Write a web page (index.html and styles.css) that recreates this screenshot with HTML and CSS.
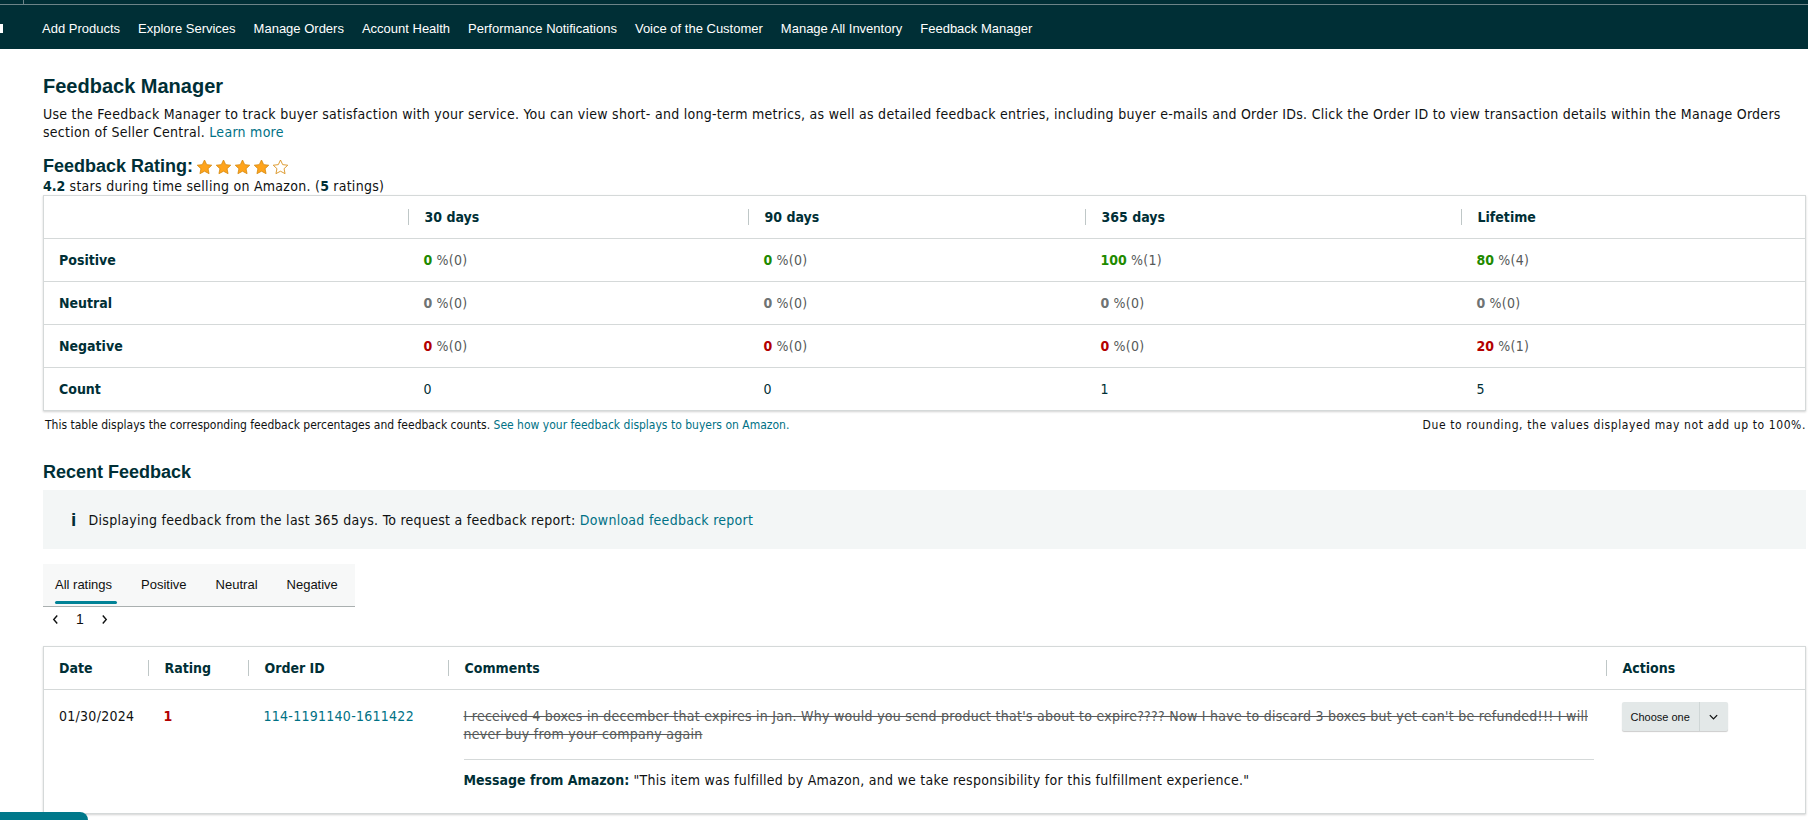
FILE: index.html
```html
<!DOCTYPE html>
<html lang="en">
<head>
    <meta charset="UTF-8">
    <meta name="viewport" content="width=device-width, initial-scale=1.0">
    <title>Feedback Manager</title>
    <link rel="stylesheet" href="styles.css">
</head>
<body>

    <div class="topbar">
        <div class="topbar-strip"><span class="strip-tick"></span></div>
        <nav class="nav">
            <span class="nav-icon"></span>
            <a href="#">Add Products</a>
            <a href="#">Explore Services</a>
            <a href="#">Manage Orders</a>
            <a href="#">Account Health</a>
            <a href="#">Performance Notifications</a>
            <a href="#">Voice of the Customer</a>
            <a href="#">Manage All Inventory</a>
            <a href="#">Feedback Manager</a>
        </nav>
    </div>

    <div class="page">
        <h1>Feedback Manager</h1>
        <p class="intro">Use the Feedback Manager to track buyer satisfaction with your service. You can view short- and long-term metrics, as well as detailed feedback entries, including buyer e-mails and Order IDs. Click the Order ID to view transaction details within the Manage Orders section of Seller Central. <a href="#">Learn more</a></p>

        <h2 class="rating-title">Feedback Rating:
            <span class="stars">
                <svg viewBox="0 0 20 19"><path class="star-full" d="M10 1.2l2.6 5.5 6 .7-4.4 4.1 1.2 5.9L10 14.5l-5.4 2.9 1.2-5.9L1.4 7.4l6-.7z"/></svg>
                <svg viewBox="0 0 20 19"><path class="star-full" d="M10 1.2l2.6 5.5 6 .7-4.4 4.1 1.2 5.9L10 14.5l-5.4 2.9 1.2-5.9L1.4 7.4l6-.7z"/></svg>
                <svg viewBox="0 0 20 19"><path class="star-full" d="M10 1.2l2.6 5.5 6 .7-4.4 4.1 1.2 5.9L10 14.5l-5.4 2.9 1.2-5.9L1.4 7.4l6-.7z"/></svg>
                <svg viewBox="0 0 20 19"><path class="star-full" d="M10 1.2l2.6 5.5 6 .7-4.4 4.1 1.2 5.9L10 14.5l-5.4 2.9 1.2-5.9L1.4 7.4l6-.7z"/></svg>
                <svg viewBox="0 0 20 19"><path class="star-empty" d="M10 1.2l2.6 5.5 6 .7-4.4 4.1 1.2 5.9L10 14.5l-5.4 2.9 1.2-5.9L1.4 7.4l6-.7z"/></svg>
            </span>
        </h2>
        <div class="rating-sub"><b>4.2</b> stars during time selling on Amazon. (<b>5</b> ratings)</div>

        <table class="box-table summary">
            <colgroup>
                <col style="width:364px">
                <col style="width:340px">
                <col style="width:337px">
                <col style="width:376px">
                <col>
            </colgroup>
            <thead>
                <tr>
                    <th></th>
                    <th><span class="col-label">30 days</span></th>
                    <th><span class="col-label">90 days</span></th>
                    <th><span class="col-label">365 days</span></th>
                    <th><span class="col-label">Lifetime</span></th>
                </tr>
            </thead>
            <tbody>
                <tr>
                    <th>Positive</th>
                    <td><b class="pos">0</b> %(0)</td>
                    <td><b class="pos">0</b> %(0)</td>
                    <td><b class="pos">100</b> %(1)</td>
                    <td><b class="pos">80</b> %(4)</td>
                </tr>
                <tr>
                    <th>Neutral</th>
                    <td><b class="neu">0</b> %(0)</td>
                    <td><b class="neu">0</b> %(0)</td>
                    <td><b class="neu">0</b> %(0)</td>
                    <td><b class="neu">0</b> %(0)</td>
                </tr>
                <tr>
                    <th>Negative</th>
                    <td><b class="neg">0</b> %(0)</td>
                    <td><b class="neg">0</b> %(0)</td>
                    <td><b class="neg">0</b> %(0)</td>
                    <td><b class="neg">20</b> %(1)</td>
                </tr>
                <tr>
                    <th>Count</th>
                    <td class="count">0</td>
                    <td class="count">0</td>
                    <td class="count">1</td>
                    <td class="count">5</td>
                </tr>
            </tbody>
        </table>

        <div class="table-note">
            <span>This table displays the corresponding feedback percentages and feedback counts. <a href="#">See how your feedback displays to buyers on Amazon.</a></span>
            <span class="note-right">Due to rounding, the values displayed may not add up to 100%.</span>
        </div>

        <h2 class="section-title">Recent Feedback</h2>

        <div class="info-box">
            <span class="info-icon">i</span>
            <span>Displaying feedback from the last 365 days. To request a feedback report: <a href="#">Download feedback report</a></span>
        </div>

        <div class="tabs">
            <a href="#" class="tab active">All ratings</a>
            <a href="#" class="tab">Positive</a>
            <a href="#" class="tab">Neutral</a>
            <a href="#" class="tab">Negative</a>
        </div>

        <div class="pager">
            <svg viewBox="0 0 8 12"><path d="M6 1.5L2 6l4 4.5"/></svg>
            <span>1</span>
            <svg viewBox="0 0 8 12"><path d="M2 1.5L6 6l-4 4.5"/></svg>
        </div>

        <table class="box-table feedback">
            <colgroup>
                <col style="width:104px">
                <col style="width:100px">
                <col style="width:200px">
                <col style="width:1158px">
                <col>
            </colgroup>
            <thead>
                <tr>
                    <th>Date</th>
                    <th><span class="col-label">Rating</span></th>
                    <th><span class="col-label">Order ID</span></th>
                    <th><span class="col-label">Comments</span></th>
                    <th><span class="col-label">Actions</span></th>
                </tr>
            </thead>
            <tbody>
                <tr>
                    <td>01/30/2024</td>
                    <td><b class="neg">1</b></td>
                    <td><a href="#">114-1191140-1611422</a></td>
                    <td class="comment-cell">
                        <div class="comment">I received 4 boxes in december that expires in Jan. Why would you send product that's about to expire???? Now I have to discard 3 boxes but yet can't be refunded!!! I will never buy from your company again</div>
                        <div class="amazon-msg"><b>Message from Amazon:</b> "This item was fulfilled by Amazon, and we take responsibility for this fulfillment experience."</div>
                    </td>
                    <td class="actions-cell">
                        <div class="split-btn">
                            <span class="split-main">Choose one</span>
                            <span class="split-arrow">
                                <svg viewBox="0 0 12 8"><path d="M2 2l4 4 4-4"/></svg>
                            </span>
                        </div>
                    </td>
                </tr>
            </tbody>
        </table>
    </div>

    <div class="help-tab"></div>

</body>
</html>
```

FILE: styles.css
```css
body {
    margin: 0;
    font-family: "DejaVu Sans Condensed", "DejaVu Sans", sans-serif;
    font-size: 14px;
    line-height: 18px;
    letter-spacing: 0.27px;
    color: #0f1111;
    background: #fff;
}

a {
    color: #007185;
    text-decoration: none;
}

b, th {
    letter-spacing: 0;
}

/* top navigation */
.topbar {
    background: #002f36;
    height: 49px;
}

.topbar-strip {
    height: 4px;
    border-bottom: 1px solid #6d8488;
}

.strip-tick {
    display: block;
    margin-left: 23px;
    width: 1px;
    height: 4px;
    background: #6d8488;
}

.nav {
    display: flex;
    align-items: center;
    gap: 18px;
    height: 44px;
    padding-top: 3px;
    box-sizing: border-box;
    font-family: "Liberation Sans", Arial, sans-serif;
    font-size: 13px;
    letter-spacing: 0;
}

.nav a {
    color: #fff;
}

.nav-icon {
    width: 3px;
    height: 9px;
    background: #fff;
    margin-right: 21px;
}

/* page */
.page {
    padding: 0 2px 30px 43px;
}

h1 {
    font-family: "Liberation Sans", Arial, sans-serif;
    font-size: 20px;
    line-height: 23px;
    letter-spacing: 0;
    color: #002f36;
    margin: 26px 0 0;
}

.intro {
    margin: 7px 0 0;
    padding-right: 20px;
}

.rating-title {
    display: flex;
    align-items: center;
    font-family: "Liberation Sans", Arial, sans-serif;
    font-size: 18px;
    line-height: 21px;
    letter-spacing: 0;
    color: #002f36;
    margin: 15px 0 0;
}

.stars {
    display: flex;
    gap: 2px;
    margin-left: 3px;
}

.stars svg {
    width: 17px;
    height: 16px;
}

.star-full {
    fill: #ffa41c;
    stroke: #d68a10;
    stroke-width: 1;
}

.star-empty {
    fill: #fff;
    stroke: #d68a10;
    stroke-width: 1;
}

.rating-sub b {
    color: #002f36;
}

/* bordered tables */
.box-table {
    width: 100%;
    border-collapse: collapse;
    table-layout: fixed;
    border: 1px solid #d5d9d9;
    box-shadow: 0 1px 2px rgba(0, 0, 0, 0.18);
}

.box-table th,
.box-table td {
    text-align: left;
    padding: 0 0 0 15px;
    border-bottom: 1px solid #d5d9d9;
    vertical-align: middle;
}

.box-table thead th {
    font-weight: bold;
    color: #002f36;
    height: 42px;
}

.box-table thead th:not(:first-child) {
    padding-left: 0;
}

.col-label {
    display: inline-block;
    border-left: 1px solid #bfc7c7;
    padding-left: 16px;
    line-height: 16px;
}

.summary tbody th,
.summary tbody td {
    height: 42px;
}

.summary tbody th {
    color: #002f36;
}

.summary tbody td {
    padding-left: 16px;
    color: #565959;
}

.summary td.count {
    color: #002f36;
}

.pos { color: #1f8a00; }
.neu { color: #6f7373; }
.neg { color: #b30000; }

.table-note {
    display: flex;
    justify-content: space-between;
    font-size: 12px;
    line-height: 15px;
    letter-spacing: 0;
    margin: 7px 0 0 2px;
}

.note-right {
    letter-spacing: 0.6px;
}

.section-title {
    font-family: "Liberation Sans", Arial, sans-serif;
    font-size: 18px;
    line-height: 21px;
    letter-spacing: 0;
    color: #002f36;
    margin: 29px 0 0;
}

.info-box {
    display: flex;
    align-items: center;
    height: 59px;
    margin-top: 7px;
    padding: 1px 0 0 28px;
    box-sizing: border-box;
    background: #f3f6f6;
}

.info-icon {
    font-family: "Liberation Sans", Arial, sans-serif;
    font-weight: bold;
    font-size: 19px;
    color: #002f36;
    margin-right: 12px;
}

/* tabs */
.tabs {
    display: flex;
    gap: 5px;
    width: 312px;
    height: 43px;
    margin-top: 15px;
    background: #f7f8f8;
    border-bottom: 1px solid #aab0b0;
    box-sizing: border-box;
    font-family: "Liberation Sans", Arial, sans-serif;
    font-size: 13px;
    letter-spacing: 0;
}

.tab {
    display: flex;
    align-items: center;
    padding: 0 12px;
    color: #0f1111;
    position: relative;
}

.tab.active::after {
    content: "";
    position: absolute;
    left: 12px;
    right: 7px;
    bottom: 2px;
    height: 3px;
    border-radius: 2px;
    background: #008296;
}

.pager {
    display: flex;
    align-items: center;
    gap: 17px;
    height: 18px;
    margin: 3px 0 0 9px;
    font-family: "Liberation Sans", Arial, sans-serif;
    font-size: 14px;
    letter-spacing: 0;
}

.pager svg {
    width: 7px;
    height: 11px;
    fill: none;
    stroke: #0f1111;
    stroke-width: 1.6;
}

/* feedback table */
.feedback {
    margin-top: 18px;
}

.feedback thead th {
    height: 42px;
}

.feedback tbody td {
    vertical-align: top;
    padding-top: 17px;
    padding-bottom: 24px;
}

.feedback tbody td:not(:first-child) {
    padding-left: 16px;
}

.feedback .comment-cell {
    padding-right: 12px;
}

.comment {
    color: #565959;
    text-decoration: line-through;
    padding-bottom: 16px;
    border-bottom: 1px solid #d5d9d9;
}

.amazon-msg {
    padding-top: 11px;
}

.amazon-msg b {
    color: #002f36;
}

.feedback .actions-cell {
    padding-top: 12px;
    padding-left: 15px;
}

.split-btn {
    display: inline-flex;
    height: 29px;
    background: #e3e8e8;
    border-radius: 2px;
    box-shadow: 0 1px 1px rgba(0, 0, 0, 0.2);
    font-family: "Liberation Sans", Arial, sans-serif;
    font-size: 11px;
    letter-spacing: 0;
    color: #0f1111;
}

.split-main {
    display: flex;
    align-items: center;
    padding: 0 9px;
    white-space: nowrap;
}

.split-arrow {
    display: flex;
    align-items: center;
    justify-content: center;
    width: 28px;
    border-left: 1px solid #cfd6d6;
}

.split-arrow svg {
    width: 11px;
    height: 8px;
    fill: none;
    stroke: #0f1111;
    stroke-width: 1.4;
}

.help-tab {
    position: fixed;
    left: 0;
    bottom: 0;
    width: 88px;
    height: 8px;
    background: #00788a;
    border-top-right-radius: 8px;
}
```
